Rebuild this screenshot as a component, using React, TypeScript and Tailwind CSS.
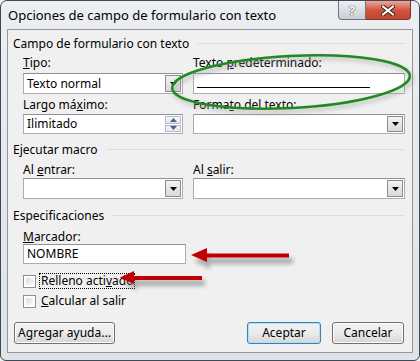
const font = "font-['Noto_Sans','Open_Sans',sans-serif]";

const Label = ({ children, className = "" }: { children: React.ReactNode; className?: string }) => (
  <div className={`h-[15px] leading-[15px] text-[12px] text-black ${className}`}>{children}</div>
);

const Header = ({ text, className = "" }: { text: string; className?: string }) => (
  <div className={`flex items-center h-[15px] pl-[5px] pr-[7px] ${className}`}>
    <span className="text-[12px] leading-[15px] text-black whitespace-nowrap">{text}</span>
    <div className="flex-1 h-px bg-[#d5dfe5] ml-[8px]" />
  </div>
);

const DropArrow = () => (
  <div className="w-[16px] h-[17px] m-[1px] border border-[#8d8d8d] bg-gradient-to-b from-[#f3f3f3] to-[#d9d9d9] flex items-center justify-center">
    <svg width="7" height="4" viewBox="0 0 7 4">
      <path d="M0 0h7L3.5 4z" fill="#000" />
    </svg>
  </div>
);

const Combo = () => (
  <div className="h-[21px] flex border border-[#abadb3] border-t-[#8e9296] bg-white">
    <div className="flex-1" />
    <DropArrow />
  </div>
);

const Check = () => (
  <div className="w-[13px] h-[13px] border border-[#8e8f8f] bg-white p-[2px]">
    <div className="w-full h-full bg-gradient-to-br from-[#dcdcdc] to-[#fbfbfb]" />
  </div>
);

const Btn = ({ children, w, primary }: { children: React.ReactNode; w: string; primary?: boolean }) => (
  <div
    className={`${w} h-[22px] rounded-[3px] border ${
      primary ? "border-[#3c7fb1] shadow-[inset_0_0_0_1px_#a7e3fc]" : "border-[#707070] shadow-[inset_0_0_0_1px_#fcfcfc]"
    } bg-gradient-to-b from-[#f2f2f2] via-[#ebebeb] to-[#d6d6d6] flex items-center justify-center text-[12px] text-black`}
  >
    {children}
  </div>
);

export default function App() {
  return (
    <div className={`${font} w-[420px] h-[361px] relative overflow-hidden bg-[#f0f0f0]`}>
      <div className="w-[420px] h-[361px] flex flex-col border border-[#3e4a55] rounded-t-[7px] rounded-b-[6px] bg-gradient-to-b from-[#eceef1] via-[#e6e8eb] to-[#dfe2e6]">
        {/* title bar */}
        <div className="h-[28px] flex items-start relative">
          <div className="pl-[7px] pt-[5px] text-[13px] leading-[18px] text-black">
            Opciones de campo de formulario con texto
          </div>
          <div className="ml-auto mr-[8px] flex">
            <div className="w-[28px] h-[19px] rounded-bl-[4px] border border-t-0 border-[#6b7580] bg-gradient-to-b from-[#eef0f2] to-[#c9ced4] flex items-center justify-center">
              <span className="text-[13px] font-bold leading-none text-white [text-shadow:0_0_1px_#333,0_0_1px_#333]">?</span>
            </div>
            <div className="w-[45px] h-[19px] rounded-br-[4px] border border-t-0 border-l-0 border-[#6b3a33] bg-gradient-to-b from-[#e9a99b] via-[#d2533f] to-[#c4432f] flex items-center justify-center">
              <svg width="14" height="11" viewBox="0 0 14 11">
                <path d="M2 1.5 L12 9.5 M12 1.5 L2 9.5" stroke="#3b1f1a" strokeWidth="4" strokeLinecap="square" />
                <path d="M2 1.5 L12 9.5 M12 1.5 L2 9.5" stroke="#fff" strokeWidth="2" strokeLinecap="square" />
              </svg>
            </div>
          </div>
        </div>

        {/* client area */}
        <div className="mx-[6px] h-[324px] border border-[#8e969e] bg-[#f0f0f0] flex flex-col">
          <Header text="Campo de formulario con texto" className="mt-[6px]" />

          <div className="grid grid-cols-[160px_212px] gap-x-[10px] pl-[15px]">
            <Label className="mt-[4px]"><u>T</u>ipo:</Label>
            <Label className="mt-[4px]">Texto <u>p</u>redeterminado:</Label>
            <div className="mt-[3px] h-[21px] flex border border-[#abadb3] border-t-[#8e9296] bg-white">
              <div className="flex-1 pl-[3px] text-[12px] leading-[19px]">Texto normal</div>
              <DropArrow />
            </div>
            <div className="mt-[3px] h-[21px] border border-[#abadb3] border-t-[#8e9296] bg-white pl-[3px] pt-[3px]">
              <div className="w-[173px] h-[11px] border-b border-black" />
            </div>
            <Label className="mt-[3px]">Largo m&aacute;<u>x</u>imo:</Label>
            <Label className="mt-[3px]">Forma<u>t</u>o del texto:</Label>
            <div className="mt-[2px] h-[20px] flex border border-[#abadb3] border-t-[#8e9296] bg-white">
              <div className="flex-1 pl-[3px] text-[12px] leading-[18px]">Ilimitado</div>
              <div className="w-[16px] flex flex-col gap-[1px] m-[1px]">
                <div className="flex-1 border border-[#b6bcc6] bg-gradient-to-b from-[#f7f8fa] to-[#e3e7ec] flex items-center justify-center">
                  <svg width="7" height="4" viewBox="0 0 7 4"><path d="M0 4h7L3.5 0z" fill="#4d6185" /></svg>
                </div>
                <div className="flex-1 border border-[#b6bcc6] bg-gradient-to-b from-[#f7f8fa] to-[#e3e7ec] flex items-center justify-center">
                  <svg width="7" height="4" viewBox="0 0 7 4"><path d="M0 0h7L3.5 4z" fill="#4d6185" /></svg>
                </div>
              </div>
            </div>
            <div className="mt-[2px] h-[20px] flex border border-[#abadb3] border-t-[#8e9296] bg-white">
              <div className="flex-1" />
              <div className="w-[16px] h-[16px] m-[1px] border border-[#8d8d8d] bg-gradient-to-b from-[#f3f3f3] to-[#d9d9d9] flex items-center justify-center">
                <svg width="7" height="4" viewBox="0 0 7 4"><path d="M0 0h7L3.5 4z" fill="#000" /></svg>
              </div>
            </div>
          </div>

          <Header text="Ejecutar macro" className="mt-[8px]" />

          <div className="grid grid-cols-[160px_212px] gap-x-[10px] pl-[15px]">
            <Label className="mt-[5px]">Al <u>e</u>ntrar:</Label>
            <Label className="mt-[5px]">Al <u>s</u>alir:</Label>
            <div className="mt-[1px]"><Combo /></div>
            <div className="mt-[1px]"><Combo /></div>
          </div>

          <Header text="Especificaciones" className="mt-[9px]" />

          <div className="pl-[15px] flex flex-col">
            <Label className="mt-[6px]"><u>M</u>arcador:</Label>
            <div className="w-[163px] h-[20px] border border-[#abadb3] border-t-[#8e9296] bg-white pl-[3px] text-[12px] leading-[18px]">
              NOMBRE
            </div>
            <div className="mt-[9px] h-[16px] flex items-center gap-[3px]">
              <Check />
              <span className="text-[12px] leading-[14px] border border-dotted border-black px-[1px]">
                Relleno acti<u>v</u>ado
              </span>
            </div>
            <div className="mt-[4px] h-[16px] flex items-center gap-[3px]">
              <Check />
              <span className="text-[12px] leading-[14px] px-[2px]"><u>C</u>alcular al salir</span>
            </div>
          </div>

          <div className="mt-auto mb-[8px] flex items-center pl-[6px] pr-[8px]">
            <Btn w="w-[101px]">A<u>g</u>regar ayuda...</Btn>
            <div className="ml-auto flex gap-[11px]">
              <Btn w="w-[74px]" primary>Aceptar</Btn>
              <Btn w="w-[72px]">Cancelar</Btn>
            </div>
          </div>
        </div>
      </div>

      {/* annotations */}
      <svg className="absolute inset-0 pointer-events-none" width="420" height="361" viewBox="0 0 420 361">
        <defs>
          <filter id="blur" x="-20%" y="-50%" width="140%" height="200%">
            <feGaussianBlur stdDeviation="2" />
          </filter>
        </defs>
        <ellipse cx="293" cy="85" rx="119" ry="26" transform="rotate(-3 293 85)" fill="none" stroke="#9a9a9a" strokeWidth="3" filter="url(#blur)" opacity="0.6" />
        <ellipse cx="291" cy="82" rx="119" ry="26" transform="rotate(-3 291 82)" fill="none" stroke="#1f8a1f" strokeWidth="2.5" />

        <g filter="url(#blur)" opacity="0.55" fill="#777">
          <path d="M194 261 L210 253 L210 258 L293 258 L293 264 L210 264 L210 269 Z" />
          <path d="M123 283 L137 276 L137 280 L205 280 L205 286 L137 286 L137 290 Z" />
        </g>
        <path d="M191 255 L207 248 L207 253.5 L289 253.5 L289 257.5 L207 257.5 L207 262 Z" fill="#c00000" />
        <path d="M120 277.5 L134 271 L134 276 L202 276 L202 280 L134 280 L134 284 Z" fill="#c00000" />
      </svg>
    </div>
  );
}
